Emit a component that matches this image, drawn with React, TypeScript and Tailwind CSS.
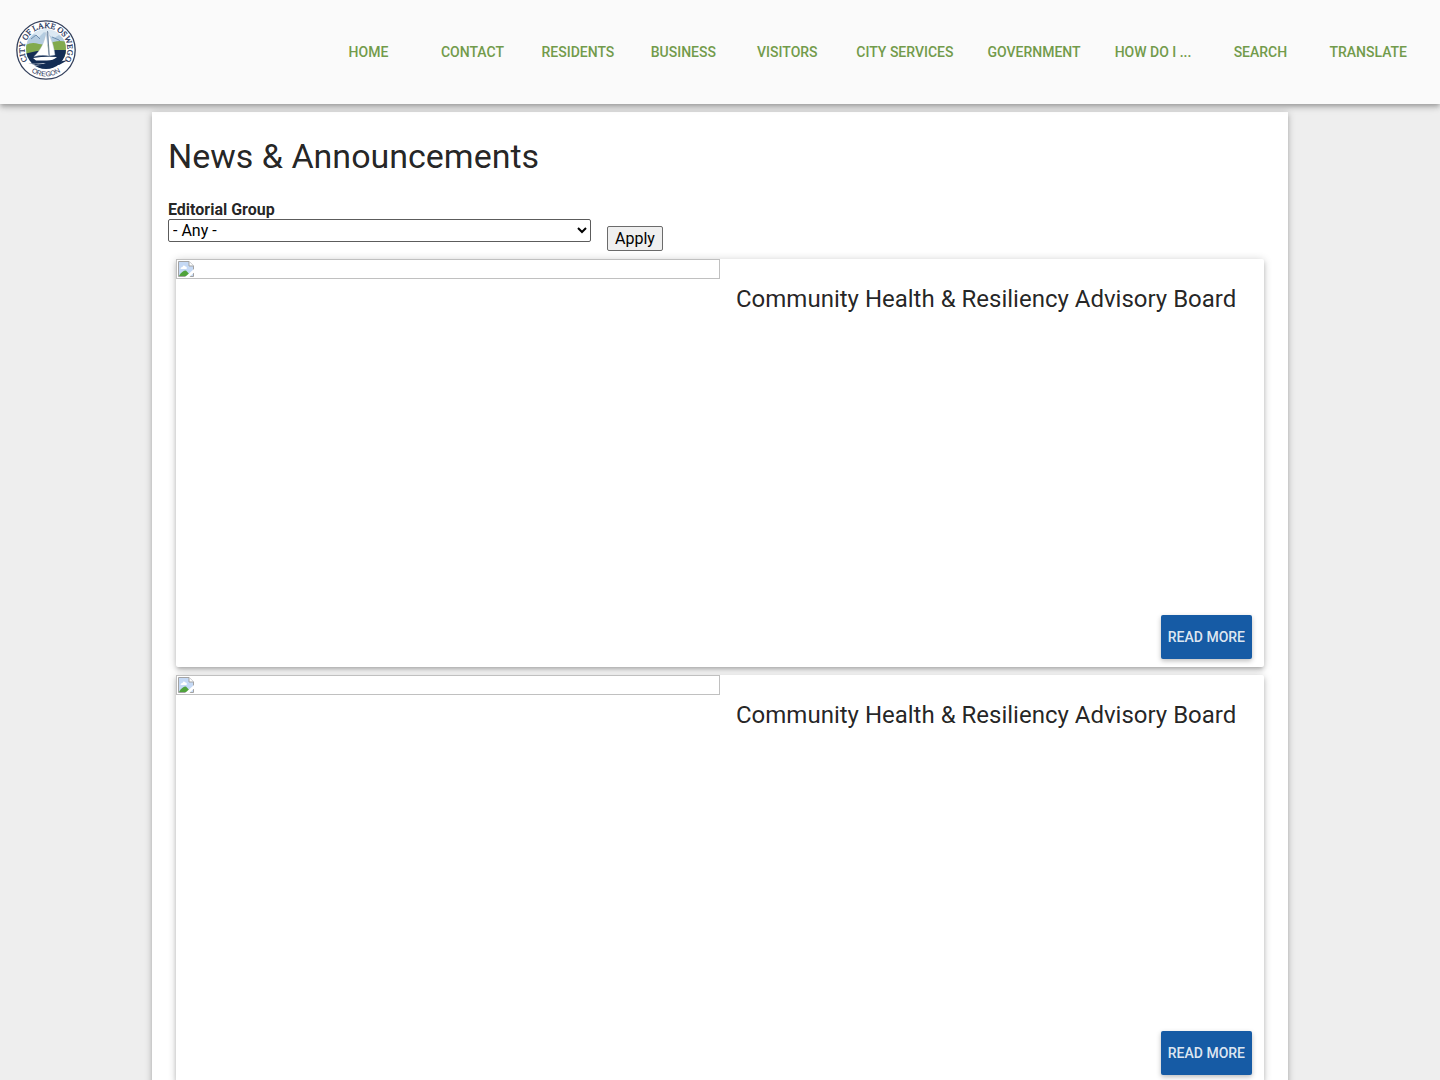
const navItems = [
  'Home',
  'Contact',
  'Residents',
  'Business',
  'Visitors',
  'City Services',
  'Government',
  'How Do I ...',
  'Search',
  'Translate',
];

const articles = [
  { id: 1, title: 'Community Health & Resiliency Advisory Board' },
  { id: 2, title: 'Community Health & Resiliency Advisory Board' },
];

function CitySeal() {
  return (
    <svg viewBox="0 0 60 60" className="size-15" role="img" aria-label="City of Lake Oswego, Oregon">
      <defs>
        <clipPath id="scene">
          <circle cx="30" cy="29" r="20" />
        </clipPath>
        <path id="ring-top" d="M11.5 40.5 A21.5 21.5 0 1 1 48.5 40.5" />
        <path id="ring-bottom" d="M9 46 A26.5 26.5 0 0 0 51 46" />
      </defs>
      <circle cx="30" cy="30" r="29.2" fill="#fff" stroke="#34405c" strokeWidth="1.3" />
      <g clipPath="url(#scene)">
        <rect x="8" y="8" width="44" height="44" fill="#dce9f3" />
        <path d="M9 22 L18 14 L23 17 L28 12 L38 18 L43 15 L52 22 V28 H9Z" fill="#b4cce0" />
        <path d="M15 19 L20 15 L24 19 M36 17 L43 20 L46 24" stroke="#6d8eb0" strokeWidth="1" fill="none" />
        <path d="M8 26 Q15 21 23 24 L31 25 Q40 19 52 22 V38 H8Z" fill="#82aa4d" />
        <path d="M8 34 L21 31 L39 30 L52 30 V53 H8Z" fill="#142d54" />
      </g>
      {/* sails and hull */}
      <path d="M30 12 C29 22 24 31 18 36.5 Q27 34.5 33 36 Z" fill="#fff" stroke="#a9b9cb" strokeWidth=".4" />
      <path d="M32 12 Q38 24 39 35 L33 36Z" fill="#fff" stroke="#a9b9cb" strokeWidth=".4" />
      <path d="M31.5 11 L33.5 38" stroke="#47607f" strokeWidth=".7" />
      <path d="M17 38 Q29 36 41 37 Q37 41 29 40.5 L20 40.5Z" fill="#fff" />
      <path d="M8 43 Q20 44.5 30 43 L24 45.5 Q14 46 8 43Z" fill="#fff" />
      <path d="M12 43 Q20 45 31 43.5 L24 46Z M36 43 L52 40 L43 45Z" fill="#142d54" />
      <g fill="#1d3157" fontFamily="Liberation Serif, serif" textAnchor="middle">
        <text fontSize="8" stroke="#1d3157" strokeWidth=".25">
          <textPath href="#ring-top" startOffset="50%">
            CITY OF LAKE OSWEGO
          </textPath>
        </text>
        <text fontSize="7" fontFamily="Liberation Sans, sans-serif">
          <textPath href="#ring-bottom" startOffset="50%">
            OREGON
          </textPath>
        </text>
      </g>
    </svg>
  );
}

function MissingImage() {
  return (
    <div className="h-5 border border-[#c0c0c0] p-px">
      <svg viewBox="0 0 16 16" className="size-4" aria-hidden="true">
        <path d="M.5 .5 H11 L15.5 5 V15.5 H.5Z" fill="#c5d9f5" stroke="#a3a3a3" />
        <path d="M11 .5 V5 H15.5" fill="#fff" stroke="#a3a3a3" />
        <path d="M2.5 8 Q2.5 6 4.5 6 Q5.5 3.5 7.5 5.5 Q9.5 6 8.5 8Z" fill="#fff" />
        <path d="M1 15 Q4 9.5 8 9.5 L13 15Z" fill="#50a33c" />
        <path d="M7 16 L16 8 V11.5 L11.5 16Z" fill="#fff" />
      </svg>
    </div>
  );
}

function ArticleCard({ title }: { title: string }) {
  return (
    <article className="flex rounded-xs bg-white shadow-[0_1px_8px_0_rgba(0,0,0,0.2),0_3px_4px_0_rgba(0,0,0,0.14),0_3px_3px_-2px_rgba(0,0,0,0.12)]">
      <div className="aspect-4/3 w-1/2">
        <MissingImage />
      </div>
      <div className="flex w-1/2 flex-col justify-between">
        <h2 className="px-4 pt-6 text-2xl">{title}</h2>
        <div className="flex justify-end pr-3 pb-2">
          <a
            href="#"
            className="rounded-xs bg-[#165ba5] px-[7px] text-sm leading-[44px] font-medium text-white/87 uppercase shadow-[0_2px_5px_0_rgba(0,0,0,0.26)]"
          >
            Read more
          </a>
        </div>
      </div>
    </article>
  );
}

export default function App() {
  return (
    <div className="min-h-screen bg-[#eeeeee] font-[Roboto,sans-serif] text-black/87">
      <header className="relative flex h-[104px] items-center justify-between bg-[#fafafa] pr-6 pl-4 shadow-[0_2px_4px_-1px_rgba(0,0,0,0.2),0_4px_5px_0_rgba(0,0,0,0.14),0_1px_10px_0_rgba(0,0,0,0.12)]">
        <a href="#" className="mb-1">
          <CitySeal />
        </a>
        <nav className="flex gap-4">
          {navItems.map((item) => (
            <a
              key={item}
              href="#"
              className="min-w-[88px] px-[9px] text-center text-sm leading-9 font-medium whitespace-nowrap text-[#729b4b] uppercase"
            >
              {item}
            </a>
          ))}
        </nav>
      </header>

      <div className="mx-auto w-4/5 px-2 pt-2">
        <main className="bg-white px-4 pt-6 pb-4 shadow-[0_1px_8px_0_rgba(0,0,0,0.2),0_3px_4px_0_rgba(0,0,0,0.14),0_3px_3px_-2px_rgba(0,0,0,0.12)]">
          <h1 className="text-[34px] leading-10">News &amp; Announcements</h1>

          <form className="mt-6 flex gap-4">
            <div>
              <label htmlFor="group" className="block leading-[19px] font-bold">
                Editorial Group
              </label>
              <select
                id="group"
                className="block h-[23px] w-[423px] rounded-xs border border-[#5c5c5c] bg-white leading-5 text-black"
              >
                <option>- Any -</option>
              </select>
            </div>
            <button
              type="button"
              className="mt-[26px] h-[25px] rounded-xs border border-[#6b6b6b] bg-[#efefef] px-[7px] leading-5 text-black"
            >
              Apply
            </button>
          </form>

          <div className="mx-2 mt-2 flex flex-col gap-2">
            {articles.map((article) => (
              <ArticleCard key={article.id} title={article.title} />
            ))}
          </div>
        </main>
      </div>
    </div>
  );
}
